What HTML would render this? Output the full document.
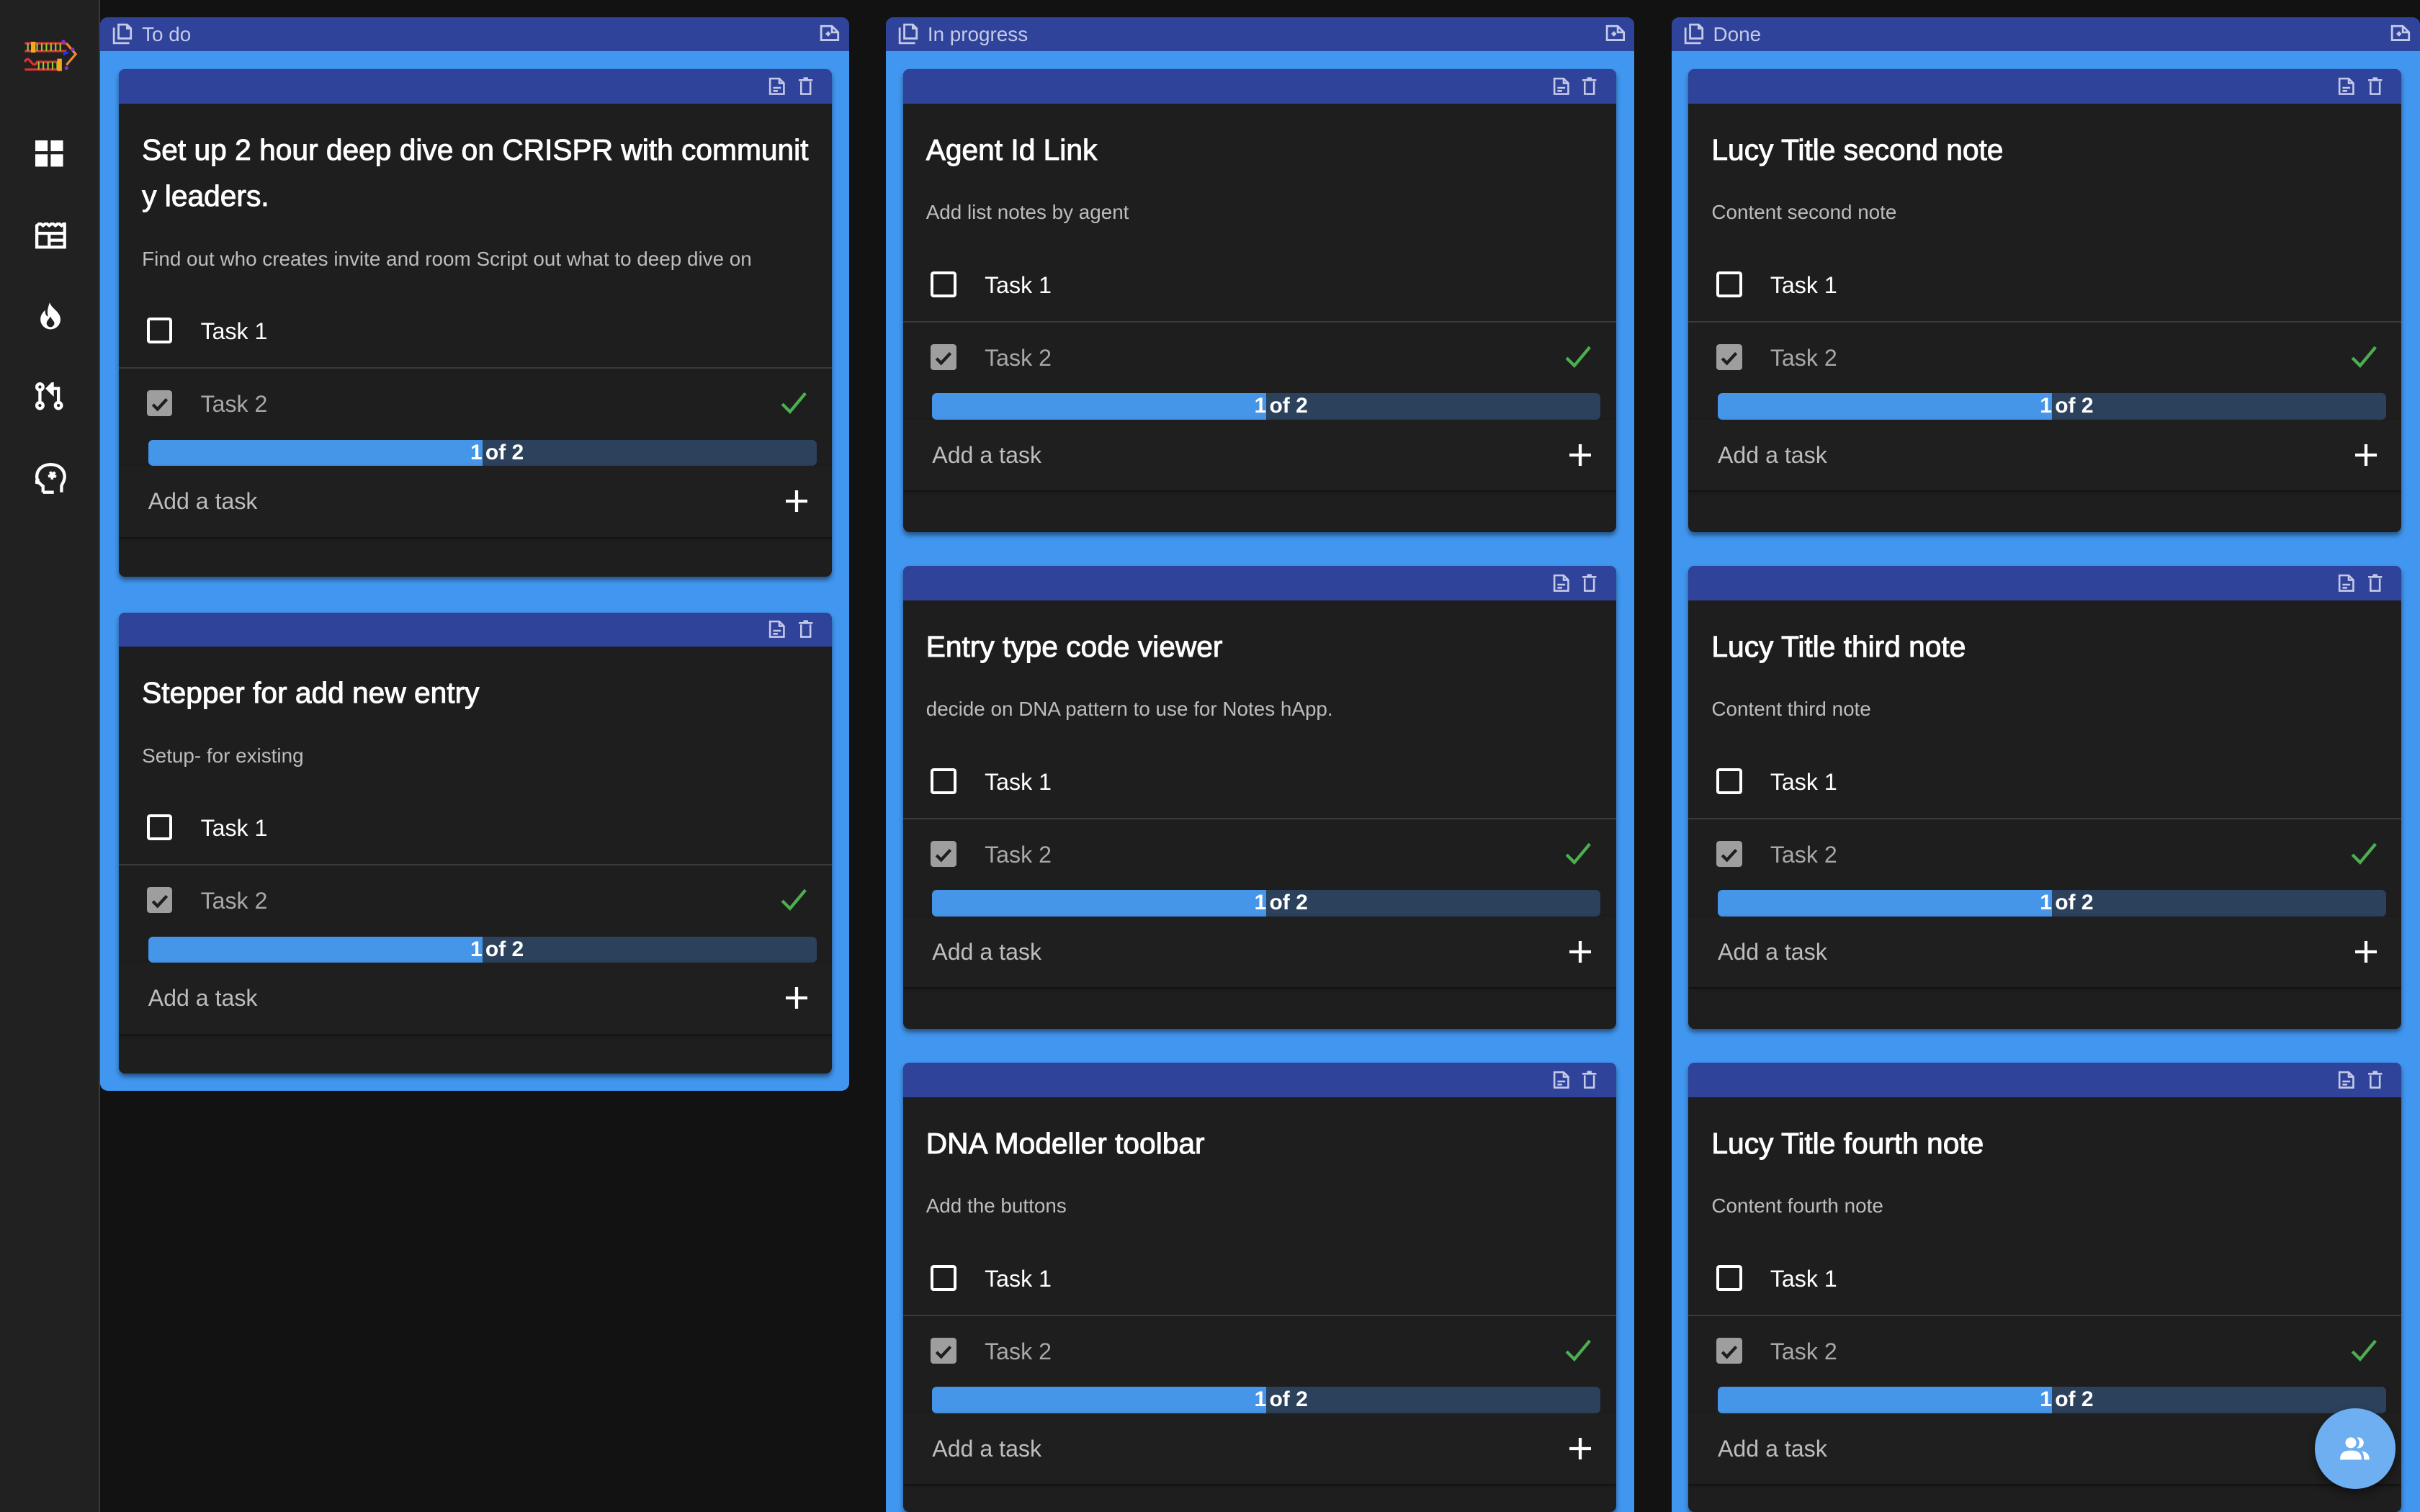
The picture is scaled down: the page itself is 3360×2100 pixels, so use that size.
<!DOCTYPE html>
<html><head><meta charset="utf-8">
<style>
html{margin:0;padding:0;overflow:hidden;width:3360px;height:2100px;background:#121212;}
body{margin:0;padding:0;width:1568px;height:980px;zoom:2.142857;background:#121212;font-family:"Liberation Sans",Roboto,sans-serif;overflow:hidden;position:relative;}
.side{position:absolute;left:0;top:0;width:64px;height:980px;background:#212121;border-right:1px solid #3a3a3a;}
.side svg{position:absolute;left:23px;}
.col{position:absolute;top:11px;width:485px;background:#4196ef;border-radius:5px;}
.colh{height:22px;background:#30439b;border-radius:5px 5px 0 0;color:#c5cae9;font-size:13px;line-height:22px;position:relative;padding-left:27px;}
.colh .li{position:absolute;left:8px;top:4px;}
.colh .ri{position:absolute;right:6px;top:4px;}
.card{position:absolute;left:11px;width:462px;background:#1e1e1e;border-radius:4px;box-shadow:0 2px 3px rgba(0,0,0,.45);overflow:hidden;}
.ch{height:22px;background:#30439b;position:relative;}
.ch svg{position:absolute;top:5px;}
.title{color:#fff;font-size:19px;line-height:30px;padding:15px 15px 0;-webkit-text-stroke:0.45px #fff;}
.desc{color:#bdbdbd;font-size:13px;line-height:20px;padding:16px 15px 0;}
.task{height:46px;position:relative;}
.t1{margin-top:14px;border-bottom:1px solid #3a3a3a;}
.task .cb{position:absolute;left:18px;top:14px;width:13px;height:13px;border:2px solid #fff;border-radius:2px;}
.task .cb.on{background:#9e9e9e;border-color:#9e9e9e;}
.task .lbl{position:absolute;left:53px;top:0;line-height:46px;font-size:15px;color:#fff;}
.task.t2 .lbl{color:#a8a8a8;}
.task .gk{position:absolute;right:16px;top:15px;}
.prog{margin:0 10px 0 19px;height:17px;border-radius:3px;background:#2c415c;position:relative;overflow:hidden;color:#fff;font-weight:bold;font-size:14px;line-height:17px;}
.prog .f{position:absolute;left:0;top:0;bottom:0;width:50%;background:#4595e8;text-align:right;}
.prog .r{position:absolute;left:50%;top:0;padding-left:2px;}
.add{height:46px;position:relative;box-shadow:0 1px 2px rgba(0,0,0,.5);background:#1f1f1f;}
.add span{position:absolute;left:19px;line-height:46px;font-size:15px;color:#bdbdbd;}
.add svg{position:absolute;right:16px;top:16px;}
.fab{position:absolute;left:1500px;top:913px;width:52px;height:52px;border-radius:50%;background:#6eaff2;box-shadow:0 3px 6px rgba(0,0,0,.4);}
.fab svg{position:absolute;left:16px;top:16px;}
</style></head><body>
<div class="side">
  <svg style="left:13px;top:20px" width="38" height="28" viewBox="0 0 38 28">
    <path d="M3 8 L30 8" stroke="#d33" stroke-width="1.5"/><path d="M3 13 L30 13" stroke="#d33" stroke-width="1.5"/>
    <path d="M5 8v5M8 8v5M11 8v5M14 8v5M17 8v5M20 8v5M23 8v5M26 8v5" stroke="#9c3" stroke-width="1"/>
    <rect x="7" y="7" width="3" height="7" fill="#f5a623"/>
    <path d="M3 20 C6 14 8 26 11 20 L26 20 M3 25 L26 25" stroke="#d33" stroke-width="1.5" fill="none"/>
    <path d="M12 20v5M15 20v5M18 20v5M21 20v5M24 20v5" stroke="#9c3" stroke-width="1"/>
    <rect x="24" y="18" width="3" height="8" fill="#f5a623"/>
    <path d="M30 8 L36 15 L30 22" stroke="#e83" stroke-width="1.5" fill="none"/>
    <circle cx="28" cy="7" r="1.2" fill="#83c"/><circle cx="34" cy="12" r="1.2" fill="#83c"/><circle cx="30" cy="24" r="1.2" fill="#83c"/>
    <path d="M32 14 l-4 -1 v3z" fill="#23f"/>
  </svg>
  <svg style="top:91px" width="18" height="18" viewBox="0 0 18 18" fill="#fff"><rect x="0" y="0" width="8" height="7"/><rect x="10" y="0" width="8" height="7"/><rect x="0" y="9" width="8" height="8"/><rect x="10" y="9" width="8" height="8"/></svg>
  <svg style="top:144px" width="20" height="18" viewBox="0 0 20 18" fill="none" stroke="#fff" stroke-width="2"><path d="M1 2 l2-1.5 2 1.5 2-1.5 2 1.5 2-1.5 2 1.5 2-1.5 2 1.5 2-1.5 V16 H1Z"/><path d="M1 7H19M9 7V16M9 11.5H19"/></svg>
  <svg style="top:196px;left:25px" width="15" height="18" viewBox="0 0 15 18"><path d="M7 0 C8 4 14 6 14 11 A6.5 6.5 0 0 1 1 11 C1 8 3 6 4 5 C4 8 5 9 6 9 C5 6 6 3 7 0Z" fill="#fff"/><path d="M7.5 9 C8 11 10 12 10 13.5 A2.5 2.5 0 0 1 5 13.5 C5 12 6.5 11 7.5 9Z" fill="#212121"/></svg>
  <svg style="top:248px" width="18" height="18" viewBox="0 0 18 18" fill="none" stroke="#fff" stroke-width="2"><circle cx="3" cy="3" r="2"/><circle cx="3" cy="15" r="2"/><circle cx="15" cy="15" r="2"/><path d="M3 5V13M15 13V4H11"/><path d="M11 1L8 4L11 7Z" fill="#fff"/></svg>
  <svg style="top:300px" width="20" height="20" viewBox="0 0 20 20" fill="none" stroke="#fff" stroke-width="2"><path d="M5 19V15C2 13 1 11 1 9C1 4 5 1 10 1C15 1 19 4 19 9C19 12 17 14 17 15V19M5 19H12M2 10L0.5 12.5L3 13"/><circle cx="11" cy="8" r="2" fill="#fff" stroke-width="1.5" stroke-dasharray="1.5 1"/></svg>
</div>

<div class="col" style="left:65px;height:696px">
  <div class="colh"><svg class="li" width="14" height="14" viewBox="0 0 14 14" fill="none" stroke="#c5cae9" stroke-width="1.3"><path d="M1 3V13H11"/><path d="M4 1H9.5L12 3.5V10H4Z"/><path d="M9.5 1V3.5H12"/></svg>To do<svg class="ri" width="13" height="13" viewBox="0 0 13 13" fill="none" stroke="#c5cae9" stroke-width="1.3"><path d="M1 2H8L12 6V11H1Z"/><path d="M8 2V6H12M4 7H7M5.5 5.5V8.5"/></svg></div>
</div>
<div class="col" style="left:574px;height:969px;border-radius:5px 5px 0 0"><div class="colh"><svg class="li" width="14" height="14" viewBox="0 0 14 14" fill="none" stroke="#c5cae9" stroke-width="1.3"><path d="M1 3V13H11"/><path d="M4 1H9.5L12 3.5V10H4Z"/><path d="M9.5 1V3.5H12"/></svg>In progress<svg class="ri" width="13" height="13" viewBox="0 0 13 13" fill="none" stroke="#c5cae9" stroke-width="1.3"><path d="M1 2H8L12 6V11H1Z"/><path d="M8 2V6H12M4 7H7M5.5 5.5V8.5"/></svg></div></div>
<div class="col" style="left:1083px;height:969px;border-radius:5px 5px 0 0"><div class="colh"><svg class="li" width="14" height="14" viewBox="0 0 14 14" fill="none" stroke="#c5cae9" stroke-width="1.3"><path d="M1 3V13H11"/><path d="M4 1H9.5L12 3.5V10H4Z"/><path d="M9.5 1V3.5H12"/></svg>Done<svg class="ri" width="13" height="13" viewBox="0 0 13 13" fill="none" stroke="#c5cae9" stroke-width="1.3"><path d="M1 2H8L12 6V11H1Z"/><path d="M8 2V6H12M4 7H7M5.5 5.5V8.5"/></svg></div></div>

<div id="cards"></div>
<script>
const cards=[
 [77,45,"Set up 2 hour deep dive on CRISPR with communit<br>y leaders.","Find out who creates invite and room Script out what to deep dive on",329],
 [77,397,"Stepper for add new entry","Setup- for existing",299],
 [585,45,"Agent Id Link","Add list notes by agent",300],
 [585,367,"Entry type code viewer","decide on DNA pattern to use for Notes hApp.",300],
 [585,689,"DNA Modeller toolbar","Add the buttons",291],
 [1094,45,"Lucy Title second note","Content second note",300],
 [1094,367,"Lucy Title third note","Content third note",300],
 [1094,689,"Lucy Title fourth note","Content fourth note",291]
];
const ico='<svg style="right:30px" width="11" height="12" viewBox="0 0 11 12" fill="none" stroke="#c5cae9" stroke-width="1.2"><path d="M1 1H7L10 4V11H1Z"/><path d="M7 1V4H10M3 7H8M3 9H6"/></svg><svg style="right:12px" width="10" height="12" viewBox="0 0 10 12" fill="none" stroke="#c5cae9" stroke-width="1.2"><path d="M2 3V11H8V3"/><path d="M0.5 2H9.5M3.5 0.8H6.5"/></svg>';
let h='';
for(const c of cards){
 h+=`<div class="card" style="left:${c[0]}px;top:${c[1]}px;height:${c[4]}px"><div class="ch">${ico}</div>
 <div class="title">${c[2]}</div><div class="desc">${c[3]}</div>
 <div class="task t1"><div class="cb"></div><div class="lbl">Task 1</div></div>
 <div class="task t2"><div class="cb on"><svg width="13" height="13" viewBox="0 0 13 13"><path d="M2 6.5L5 9.5L11 3" stroke="#1e1e1e" stroke-width="2" fill="none"/></svg></div><div class="lbl">Task 2</div><svg class="gk" width="17" height="15" viewBox="0 0 17 15"><path d="M1 8L6 13L16 1" stroke="#4caf50" stroke-width="2" fill="none"/></svg></div>
 <div class="prog"><div class="f">1</div><div class="r">of 2</div></div>
 <div class="add"><span>Add a task</span><svg width="14" height="14" viewBox="0 0 14 14"><path d="M7 0V14M0 7H14" stroke="#fff" stroke-width="2"/></svg></div></div>`;
}
document.getElementById('cards').outerHTML=h;
</script>
<div class="fab"><svg width="20" height="20" viewBox="0 0 20 20" fill="#fff"><circle cx="7" cy="6" r="3.5"/><path d="M0 17C0 12 3 11 7 11C11 11 14 12 14 17Z"/><path d="M11 2.6A3.5 3.5 0 1 1 11 9.4A4.6 4.6 0 0 0 11 2.6Z"/><path d="M14 11.3C17 12 19 13 19 17H15.5C15.5 14 15 12.5 14 11.3Z"/></svg></div>
</body></html>
